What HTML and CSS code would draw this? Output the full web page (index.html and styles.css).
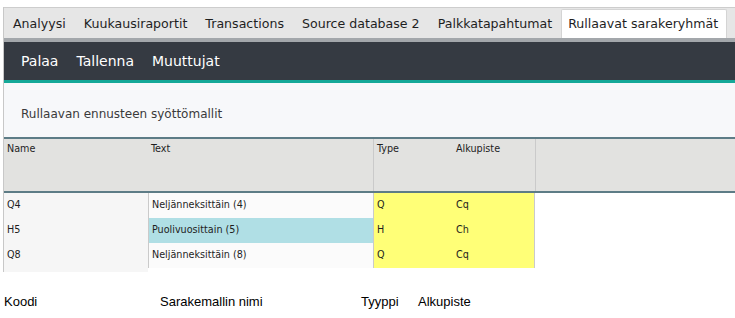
FILE: index.html
```html
<!DOCTYPE html>
<html>
<head>
<meta charset="utf-8">
<link rel="stylesheet" href="styles.css">
</head>
<body>
<div class="frame">
  <div class="tabs">
    <div class="tab">Analyysi</div>
    <div class="tab">Kuukausiraportit</div>
    <div class="tab">Transactions</div>
    <div class="tab">Source database 2</div>
    <div class="tab">Palkkatapahtumat</div>
    <div class="tab active">Rullaavat sarakeryhmät</div>
  </div>
  <div class="strip"></div>
  <div class="menu">
    <span class="menu-item">Palaa</span>
    <span class="menu-item">Tallenna</span>
    <span class="menu-item">Muuttujat</span>
  </div>
  <div class="caption">Rullaavan ennusteen syöttömallit</div>
  <div class="grid">
    <div class="head">
      <div class="hc c-name">Name</div>
      <div class="hc c-text">Text</div>
      <div class="hc c-type sep">Type</div>
      <div class="hc c-alku">Alkupiste</div>
      <div class="hc c-fill sep"></div>
    </div>
    <div class="row">
      <div class="cell c-name">Q4</div>
      <div class="cell c-text sepl">Neljänneksittäin (4)</div>
      <div class="cell c-type yel">Q</div>
      <div class="cell c-alku yel">Cq</div>
    </div>
    <div class="row">
      <div class="cell c-name">H5</div>
      <div class="cell c-text sepl sel">Puolivuosittain (5)</div>
      <div class="cell c-type yel">H</div>
      <div class="cell c-alku yel">Ch</div>
    </div>
    <div class="row">
      <div class="cell c-name">Q8</div>
      <div class="cell c-text sepl">Neljänneksittäin (8)</div>
      <div class="cell c-type yel">Q</div>
      <div class="cell c-alku yel">Cq</div>
    </div>
    <div class="tail"></div>
  </div>
</div>
<div class="labels">
  <span class="lbl l1">Koodi</span>
  <span class="lbl l2">Sarakemallin nimi</span>
  <span class="lbl l3">Tyyppi</span>
  <span class="lbl l4">Alkupiste</span>
</div>
</body>
</html>
```
FILE: styles.css
```css
html, body {
  margin: 0;
  padding: 0;
  background: #ffffff;
}
body {
  font-family: "DejaVu Sans", Verdana, sans-serif;
  color: #222;
}
.frame {
  margin-top: 7px;
  margin-left: 3px;
  border-left: 1px solid #c8c8c8;
}
.tabs {
  display: flex;
  height: 30px;
  padding-left: 0;
  background: #e6e6e6;
  border-top: 1px solid #cdcdcd;
  align-items: flex-end;
  overflow: hidden;
}
.tab {
  flex-shrink: 0;
  white-space: nowrap;
  height: 30px;
  line-height: 30px;
  padding: 0 8px 0 8px;
  border: 1px solid transparent;
  border-bottom: none;
  font-size: 12.6px;
  color: #1f1f1f;
  box-sizing: border-box;
}
.tab.active {
  background: #ffffff;
  border-color: #d4d4d4;
  border-radius: 2px 2px 0 0;
  height: 29px;
  line-height: 28px;
  padding: 0 8px 0 6px;
}
.strip {
  height: 4px;
  background: #a3a7ab;
}
.menu {
  display: flex;
  height: 38px;
  align-items: center;
  padding-left: 8px;
  background: #353a42;
  border-bottom: 3px solid #15a898;
}
.menu-item {
  font-size: 14px;
  color: #ffffff;
  padding: 0 9px;
}
.caption {
  height: 54px;
  box-sizing: border-box;
  padding: 24px 0 0 17px;
  background: #f7f8fa;
  font-size: 12px;
  color: #3a3a3a;
}
.grid {
  font-family: "DejaVu Sans Condensed", Tahoma, sans-serif;
  font-size: 10.7px;
  color: #1e1e1e;
}
.head {
  display: flex;
  height: 56px;
  background: #e2e2e0;
  border-top: 2px solid #5d7c86;
  border-bottom: 2px solid #5d7c86;
  box-sizing: border-box;
}
.hc {
  padding: 3px 0 0 3px;
  box-sizing: border-box;
}
.c-name { width: 144px; padding-left: 3px; }
.c-text { width: 225px; }
.c-type { width: 80px; }
.c-alku { width: 82px; }
.c-fill { flex: 1; }
.sep { border-left: 1px solid #cacaca; }
.row {
  display: flex;
  height: 25px;
}
.cell {
  line-height: 24px;
  box-sizing: border-box;
  padding-left: 3px;
}
.row .c-name { background: #f6f6f6; }
.row .c-text { background: #fbfbfb; }
.row .c-type { border-left: 1px solid #cacaca; }
.row .c-alku { border-right: 1px solid #cacaca; }
.sepl { border-left: 1px solid #cacaca; }
.row .sel { background: #b0dfe5; }
.yel { background: #ffff77; }
.tail {
  width: 144px;
  height: 4px;
  background: #f6f6f6;
}
.labels {
  display: flex;
  margin-top: 22px;
  padding-left: 4px;
  font-family: "Liberation Sans", Arial, sans-serif;
  font-size: 13px;
  color: #000;
}
.lbl { display: block; }
.l1 { width: 156px; }
.l2 { width: 201px; }
.l3 { width: 57px; }
```
